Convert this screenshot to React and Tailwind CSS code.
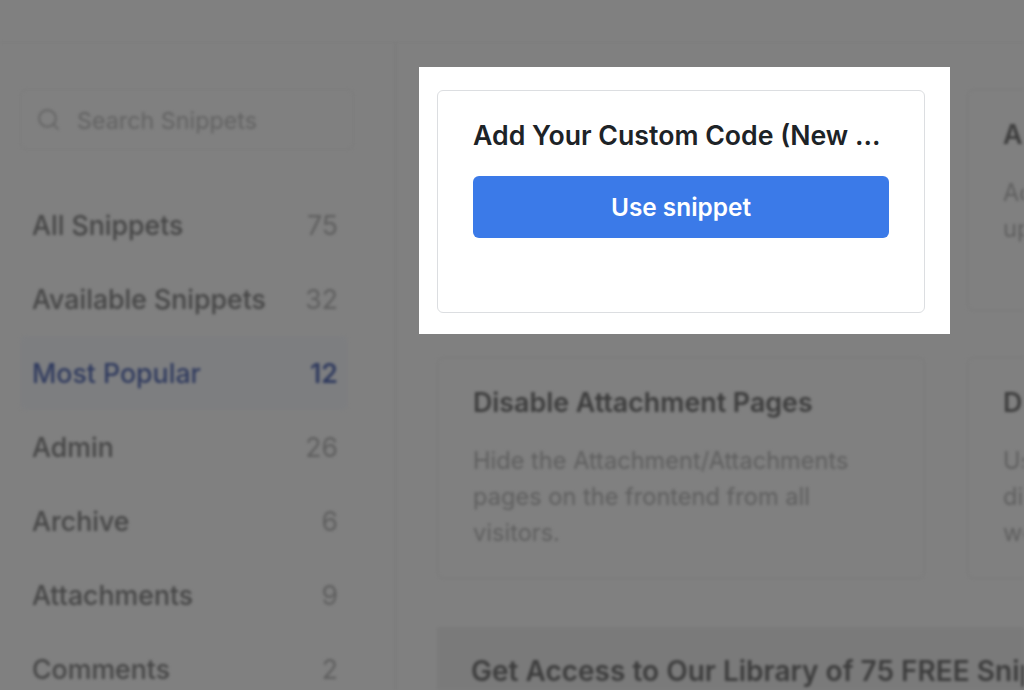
import React from "react";
import { Search } from "lucide-react";

const items = [
  ["All Snippets", "75"],
  ["Available Snippets", "32"],
  ["Most Popular", "12", true],
  ["Admin", "26"],
  ["Archive", "6"],
  ["Attachments", "9"],
  ["Comments", "2"],
];

function Card({ title, desc }) {
  return (
    <div className="w-[488px] h-[222px] shrink-0 rounded-md border border-[#797979] px-[35px] pt-[26px]">
      <div className="h-[36px] text-[26.8px] leading-[36px] font-semibold text-[#3c3c3c] whitespace-nowrap">{title}</div>
      <p className="mt-[23px] text-[23.6px] leading-[36px] text-[#5e5e5e]">{desc}</p>
    </div>
  );
}

export default function App() {
  return (
    <div className="relative w-[1024px] h-[690px] overflow-hidden bg-[#808080] font-['Inter',sans-serif]">
      <div className="flex flex-col h-full blur-[1.4px]">
        <div className="h-[43px] shrink-0 border-b border-[#7a7a7a]" />
        <div className="flex flex-1 min-h-0">
          <aside className="w-[396px] shrink-0 border-r border-[#777777] pl-[20px] pr-[41px] pt-[46px]">
            <div className="h-[61px] rounded-md border border-[#7a7a7a] flex items-center pl-[15px] gap-[16px]">
              <Search size={25} strokeWidth={2} className="text-[#666666] shrink-0" />
              <span className="text-[23.3px] pt-[3px] text-[#626262]">Search Snippets</span>
            </div>
            <div className="mt-[38px] mr-[6px]">
              {items.map(([label, count, active]) => (
                <div
                  key={label}
                  className={
                    active
                      ? "h-[74px] flex items-center justify-between pl-[12px] pr-[10px] rounded-md bg-[#7d7e80] text-[#2f3a5e]"
                      : "h-[74px] flex items-center justify-between pl-[12px] pr-[10px] text-[#454545]"
                  }
                >
                  <span className="text-[26.7px] font-medium">{label}</span>
                  <span className={active ? "text-[26.7px] font-semibold" : "text-[26.7px] text-[#5e5e5e]"}>{count}</span>
                </div>
              ))}
            </div>
          </aside>
          <main className="flex-1 min-w-0 overflow-hidden pl-[41px] pt-[46px]">
            <div className="flex gap-[42px]">
              <Card title="" desc="" />
              <Card title="Allow SVG Files Upload" desc="Add support for SVG files to be uploaded in WordPress." />
            </div>
            <div className="flex gap-[42px] mt-[46px]">
              <Card title="Disable Attachment Pages" desc="Hide the Attachment/Attachments pages on the frontend from all visitors." />
              <Card title="Disable Automatic Updates" desc="Use this snippet to completely disable automatic updates on your website." />
            </div>
            <div className="mt-[48px] h-[100px] bg-[#7a7a7a] pl-[34px] pt-[26px] whitespace-nowrap text-[28px] leading-[36px] font-semibold text-[#3c3c3c]">
              Get Access to Our Library of 75 FREE Snippets
            </div>
          </main>
        </div>
      </div>

      <div className="absolute left-[419px] top-[67px] w-[531px] h-[267px] bg-white pl-[18px] pt-[23px]">
        <div className="w-[488px] h-[223px] rounded-md border border-[#dcdee1] px-[35px] pt-[26px]">
          <div className="text-[26.7px] leading-[36px] font-semibold text-[#1d2327] whitespace-nowrap">Add Your Custom Code (New ...</div>
          <button className="mt-[23px] w-[416px] h-[62px] rounded-md bg-[#3b7ae8] text-white text-[24.4px] font-semibold">Use snippet</button>
        </div>
      </div>
    </div>
  );
}
